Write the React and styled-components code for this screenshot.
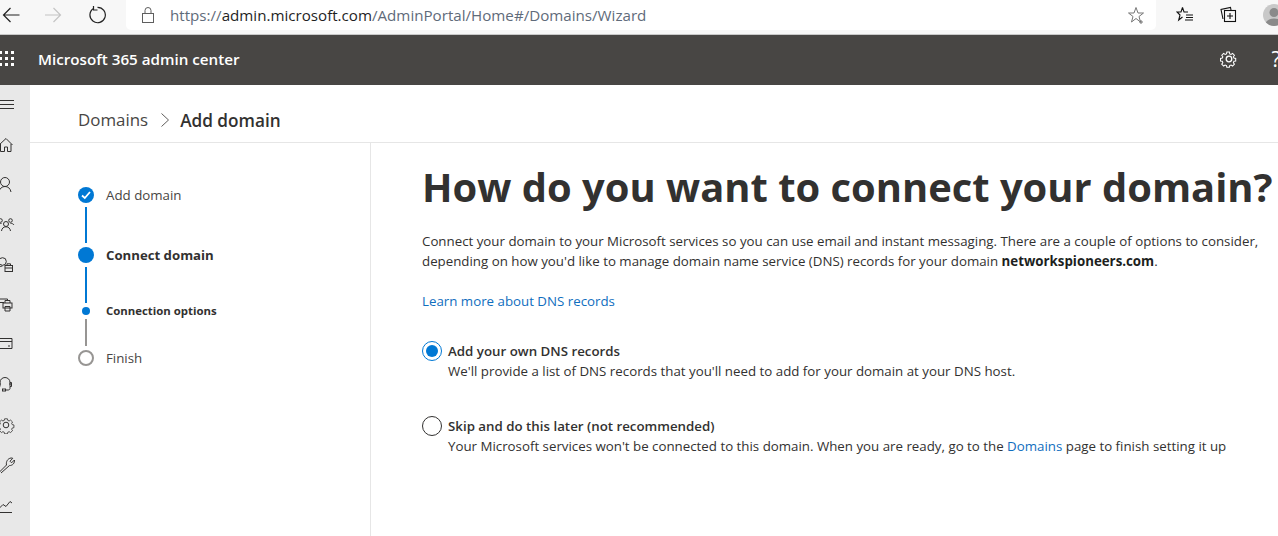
import React from 'react';
import styled, { createGlobalStyle } from 'styled-components';

const Global = createGlobalStyle`
  html, body { margin: 0; padding: 0; height: 100%; overflow: hidden; background: #fff; }
  body { font-family: "Open Sans", "Noto Sans", "Liberation Sans", sans-serif; color: #323130; }
  * { box-sizing: border-box; }
`;

const Page = styled.div`
  width: 1278px;
  height: 536px;
  display: flex;
  flex-direction: column;
  overflow: hidden;
`;

const BrowserBar = styled.div`
  height: 35px;
  flex: none;
  background: #f7f7f7;
  border-bottom: 1px solid #c9c9c9;
  display: flex;
  align-items: flex-start;
  padding-left: 1px;
  overflow: hidden;
`;

const NavButton = styled.div`
  width: ${p => p.$w}px;
  height: 30px;
  display: flex;
  align-items: center;
  justify-content: center;
  flex: none;
  svg { display: block; }
`;

const UrlBox = styled.div`
  width: 1030px;
  height: 30px;
  margin-left: 17px;
  flex: none;
  background: #fff;
  border-radius: 0 0 5px 5px;
  display: flex;
  align-items: center;
  padding: 0 10px 0 14px;
  font-size: 15.15px;
  color: #1f1f1f;
`;

const UrlText = styled.span`
  margin-left: 14px;
  flex: 1;
  white-space: nowrap;
  span { color: #5f6b7a; }
`;

const Avatar = styled.div`
  width: 22px;
  height: 22px;
  border-radius: 50%;
  background: #c8c8c8;
  margin: 4px 0 0 19px;
  flex: none;
  overflow: hidden;
  svg { display: block; }
`;

const Header = styled.header`
  height: 50px;
  flex: none;
  background: #484644;
  color: #fff;
  display: flex;
  align-items: center;
  overflow: hidden;
`;

const Waffle = styled.div`
  width: 15px;
  margin: -3px 0 0 -1px;
  display: grid;
  grid-template-columns: repeat(3, 3px);
  gap: 3px;
  flex: none;
  i { display: block; width: 3px; height: 3px; background: #fff; }
`;

const Title = styled.div`
  margin-left: 24px;
  margin-top: -2px;
  font-size: 15.2px;
  font-weight: 600;
  flex: 1;
  white-space: nowrap;
`;

const HeaderIcon = styled.div`
  width: 20px;
  margin-top: -2px;
  margin-right: ${p => p.$mr}px;
  flex: none;
  font-size: 21px;
  display: flex;
  justify-content: center;
  svg { display: block; }
`;

const Body = styled.div`
  flex: 1;
  display: flex;
  min-height: 0;
`;

const Rail = styled.nav`
  width: 30px;
  flex: none;
  background: #e8e8e8;
  display: flex;
  flex-direction: column;
  overflow: hidden;
  padding-top: 14px;
`;

const RailIcon = styled.div`
  height: 40px;
  flex: none;
  margin-left: -2px;
  svg { display: block; }
`;

const RailFirst = styled(RailIcon)`
  height: 37px;
  margin-left: -1px;
`;

const Main = styled.main`
  flex: 1;
  display: flex;
  flex-direction: column;
  min-width: 0;
`;

const Crumbs = styled.div`
  height: 58px;
  flex: none;
  border-bottom: 1px solid #e6e6e6;
  display: flex;
  align-items: center;
  padding: 12px 0 0 48px;
`;

const CrumbLink = styled.span`
  font-size: 16.9px;
  color: #484644;
`;

const CrumbSep = styled.span`
  margin: 0 10px 0 12px;
  display: flex;
  svg { display: block; }
`;

const CrumbCurrent = styled.span`
  padding-top: 2px;
  font-size: 17.2px;
  font-weight: 600;
`;

const Columns = styled.div`
  flex: 1;
  display: flex;
  min-height: 0;
`;

const Steps = styled.aside`
  width: 341px;
  flex: none;
  border-right: 1px solid #e6e6e6;
  padding: 44px 0 0 48px;
`;

const Step = styled.div`
  display: flex;
  height: 16px;
  align-items: center;
`;

const Marker = styled.div`
  width: 16px;
  height: 16px;
  flex: none;
  border-radius: 50%;
  display: flex;
  align-items: center;
  justify-content: center;
  background: ${p => (p.$kind === 'todo' ? '#fff' : p.$kind === 'sub' ? 'transparent' : '#0078d4')};
  border: ${p => (p.$kind === 'todo' ? '2px solid #979593' : 'none')};
  &::after {
    content: ${p => (p.$kind === 'sub' ? '""' : 'none')};
    width: 8px;
    height: 8px;
    border-radius: 50%;
    background: #0078d4;
  }
  svg { display: block; }
`;

const StepLabel = styled.span`
  margin-left: 12px;
  margin-top: ${p => (p.$sub ? -2 : 0)}px;
  font-size: ${p => (p.$sub ? 11.4 : p.$bold ? 13.2 : 13.3)}px;
  font-weight: ${p => (p.$bold ? 700 : 400)};
  color: ${p => (p.$bold ? '#323130' : '#484644')};
  white-space: nowrap;
`;

const Connector = styled.div`
  width: 2px;
  height: ${p => p.$h}px;
  margin: ${p => p.$mt}px 0 ${p => p.$mb}px 7px;
  background: ${p => p.$color};
`;

const Content = styled.section`
  flex: 1;
  min-width: 0;
  padding: 17px 0 0 51px;
  overflow: hidden;
`;

const Heading = styled.h1`
  margin: 0;
  font-size: 39.9px;
  line-height: 54px;
  font-weight: 700;
  white-space: nowrap;
  color: #323130;
`;

const Intro = styled.p`
  margin: 17px 0 0;
  font-size: 13.3px;
  line-height: 20px;
  white-space: nowrap;
  color: #323130;
  strong { font-weight: 700; color: #201f1e; }
`;

const LearnMore = styled.a`
  display: block;
  margin-top: 20px;
  font-size: 13.3px;
  line-height: 20px;
  color: #106ebe;
`;

const Option = styled.div`
  display: flex;
  margin-top: ${p => p.$mt}px;
`;

const Radio = styled.div`
  width: 20px;
  height: 20px;
  flex: none;
  border-radius: 50%;
  border: 1px solid ${p => (p.$on ? '#0078d4' : '#323130')};
  display: flex;
  align-items: center;
  justify-content: center;
  &::after {
    content: ${p => (p.$on ? '""' : 'none')};
    width: 12px;
    height: 12px;
    border-radius: 50%;
    background: #0078d4;
  }
`;

const OptionText = styled.div`
  margin-left: 6px;
  font-size: 13.3px;
  line-height: 20px;
  white-space: nowrap;
  a { color: #106ebe; }
`;

const OptionTitle = styled.div`
  font-weight: 600;
`;

const stroke = { fill: 'none', stroke: '#323130', strokeWidth: 1 };

const RailSvg = ({ children }) => (
  <svg width="18" height="18" viewBox="0 0 18 18" {...stroke}>{children}</svg>
);

const railIcons = [
  <path key="h" d="M1 9 8 2.500 14.500 9M2.500 8v7.500h4V11h3v4.500h3.500V8" />,
  <g key="u"><circle cx="7" cy="6" r="4.500" /><path d="M1 16c.6-3.600 3-5.500 6-5.500s5.400 1.900 6 5.500" /></g>,
  <g key="g"><circle cx="8" cy="8" r="2.500" /><circle cx="2.500" cy="4.500" r="1.800" /><circle cx="12.500" cy="4.500" r="1.800" /><path d="M3.500 15c.3-2.600 2-4.200 4.500-4.200s4.200 1.600 4.500 4.200M0 9c.8-1.200 2-1.800 3.500-1.500M16 9c-.8-1.200-2-1.800-3.500-1.500" /></g>,
  <g key="a"><circle cx="4.500" cy="5.500" r="3.800" /><path d="M0 14c.5-2.200 2-4 4.500-4" /><rect x="7" y="9.500" width="7.500" height="6" /><path d="M9 9.500V7.800h3.500v1.700M7 12h7.500" /></g>,
  <g key="p"><path d="M1 10.500V3h8.500v2" /><path d="M1 6.500h5" /><rect x="5" y="7" width="9" height="5" /><path d="M7 7V4.500h5V7M7 10.500h5V15H7z" /></g>,
  <g key="c"><path d="M-1 2.500h15v10H-1zM-1 5.500h15M10 10h2" /></g>,
  <g key="s"><path d="M2 9V6.500C2 3.500 4.300 1.500 7 1.500s5 2 5 5V9" /><path d="M12 6.500h1.500v4H12zM2 6.500H.5v4H2zM12 10.500v2c0 1-1 1.500-2 1.500H7" /><rect x="4.500" y="13" width="3" height="2" /></g>,
  <g key="g2"><circle cx="8" cy="9" r="2.800" /><path d="M6.300 2h3.400l.4 2 1.600.7 1.700-1.100 2.400 2.400-1.100 1.700.7 1.600 2 .4v3.400l-2 .4-.7 1.600 1.100 1.700-2.400 2.400-1.700-1.100-1.600.7-.4 2H6.300l-.4-2-1.600-.7-1.700 1.100L.2 16.800l1.100-1.700-.7-1.600-2-.4V9.700l2-.4.7-1.600L.2 6 2.600 3.600l1.700 1.100 1.600-.7z" transform="translate(1.300 1.200) scale(.84 .8)" /></g>,
  <path key="w" d="M1 16.500 8.500 9C7.800 6 9.500 2.500 13 2c.8 0 1.300.1 1.800.3L12 5.200l1.600 1.600 2.800-2.800c.4 3-1.500 5.500-5 5.600L3 17" />,
  <g key="l"><path d="M0 13.500 5 8.500 8 10.500 12 5.500 14 7" /><path d="M-1 16.500h15" /></g>,
];

function Lock() {
  return (
    <svg width="16" height="18" viewBox="0 0 16 18" fill="none" stroke="#5f5f5f" strokeWidth="1">
      <rect x="2.500" y="7.500" width="11" height="9" />
      <path d="M5 7.500V4.500a3 3 0 0 1 6 0v3" />
    </svg>
  );
}

function Gear({ size = 18 }) {
  return (
    <svg width={size} height={size} viewBox="0 0 18 18" fill="none" stroke="#fff" strokeWidth="1.300">
      <circle cx="9" cy="9" r="2.800" />
      <path d="M7.400 1.500h3.200l.4 2.200 1.700.7 1.900-1.300 2.300 2.300-1.300 1.900.7 1.700 2.200.4v3.200l-2.200.4-.7 1.700 1.300 1.900-2.300 2.300-1.900-1.300-1.700.7-.4 2.200H7.400L7 18.300l-1.700-.7-1.900 1.300-2.300-2.300 1.300-1.900-.7-1.700-2.200-.4v-3.200l2.200-.4.7-1.700-1.300-1.900 2.300-2.300 1.900 1.300L7 3.700z" transform="translate(.9 .9) scale(.8)" />
    </svg>
  );
}

export default function App() {
  return (
    <Page>
      <Global />
      <BrowserBar>
        <NavButton $w={20}>
          <svg width="18" height="18" viewBox="0 0 18 18" fill="none" stroke="#222" strokeWidth="1.200">
            <path d="M1.500 9h16M8.500 2 1.500 9l7 7" />
          </svg>
        </NavButton>
        <NavButton $w={64}>
          <svg width="18" height="18" viewBox="0 0 18 18" fill="none" stroke="#c4c4c4" strokeWidth="1.200">
            <path d="M1 9h15.500M9.500 2l7 7-7 7" />
          </svg>
        </NavButton>
        <NavButton $w={24}>
          <svg width="18" height="18" viewBox="0 0 18 18" fill="none" stroke="#222" strokeWidth="1.200">
            <path d="M5.500 2.500A7.700 7.700 0 1 0 9.500 1.300" />
            <path d="M5 1v4h4" transform="translate(.5 -1)" />
          </svg>
        </NavButton>
        <UrlBox>
          <Lock />
          <UrlText><span>https://</span>admin.microsoft.com<span>/AdminPortal/Home#/Domains/Wizard</span></UrlText>
          <svg width="18" height="18" viewBox="0 0 18 18" fill="none" stroke="#777" strokeWidth="1">
            <path d="M8 1.500 10 7h5.500L11 10.500 12.500 16 8 12.500 3.500 16 5 10.500.5 7H6zM13 14v4M11 16h4" />
          </svg>
        </UrlBox>
        <NavButton $w={58}>
          <svg width="18" height="18" viewBox="0 0 18 18" fill="none" stroke="#111" strokeWidth="1.100">
            <path d="M6.500 1.500 8 6H12M6.500 1.500 5 6H1l3 3-1.300 5 3.800-3M10 9h7M10 11.500h7M9 14h8" />
          </svg>
        </NavButton>
        <NavButton $w={30}>
          <svg width="18" height="18" viewBox="0 0 18 18" fill="none" stroke="#111" strokeWidth="1.100">
            <path d="M3 13 1 3.500 10.500 1.500l.5 2.500" />
            <rect x="4.500" y="4.500" width="11" height="11" />
            <path d="M10 7v6M7 10h6" />
          </svg>
        </NavButton>
        <Avatar>
          <svg width="22" height="22" viewBox="0 0 22 22" fill="#8a8a8a">
            <circle cx="11" cy="8.500" r="4.500" />
            <path d="M2 22c0-5 4-7.500 9-7.500s9 2.500 9 7.500z" />
          </svg>
        </Avatar>
      </BrowserBar>

      <Header>
        <Waffle>{Array.from({ length: 9 }, (_, i) => <i key={i} />)}</Waffle>
        <Title>Microsoft 365 admin center</Title>
        <HeaderIcon $mr={27}><Gear /></HeaderIcon>
        <HeaderIcon $mr={-8}>?</HeaderIcon>
      </Header>

      <Body>
        <Rail>
          <RailFirst>
            <svg width="16" height="12" viewBox="0 0 16 12" stroke="#323130" strokeWidth="1">
              <path d="M0 1.500h15M0 5.500h15M0 9.500h15" />
            </svg>
          </RailFirst>
          {railIcons.map((icon, i) => <RailIcon key={i}><RailSvg>{icon}</RailSvg></RailIcon>)}
        </Rail>
        <Main>
          <Crumbs>
            <CrumbLink>Domains</CrumbLink>
            <CrumbSep>
              <svg width="10" height="16" viewBox="0 0 10 16" fill="none" stroke="#605e5c" strokeWidth="1">
                <path d="m1.500 1.500 7 6.500-7 6.500" />
              </svg>
            </CrumbSep>
            <CrumbCurrent>Add domain</CrumbCurrent>
          </Crumbs>
          <Columns>
            <Steps>
              <Step>
                <Marker $kind="done">
                  <svg width="12" height="12" viewBox="0 0 12 12" fill="none" stroke="#fff" strokeWidth="1.800">
                    <path d="m2 6.500 2.800 2.500L10 3" />
                  </svg>
                </Marker>
                <StepLabel>Add domain</StepLabel>
              </Step>
              <Connector $h={36} $mt={4} $mb={4} $color="#0078d4" />
              <Step>
                <Marker $kind="current" />
                <StepLabel $bold>Connect domain</StepLabel>
              </Step>
              <Connector $h={36} $mt={4} $mb={0} $color="#0078d4" />
              <Step>
                <Marker $kind="sub" />
                <StepLabel $sub $bold>Connection options</StepLabel>
              </Step>
              <Connector $h={27} $mt={0} $mb={4} $color="#979593" />
              <Step>
                <Marker $kind="todo" />
                <StepLabel>Finish</StepLabel>
              </Step>
            </Steps>
            <Content>
              <Heading>How do you want to connect your domain?</Heading>
              <Intro>
                Connect your domain to your Microsoft services so you can use email and instant messaging. There are a couple of options to consider,<br />
                depending on how you'd like to manage domain name service (DNS) records for your domain <strong>networkspioneers.com</strong>.
              </Intro>
              <LearnMore>Learn more about DNS records</LearnMore>
              <Option $mt={30}>
                <Radio $on />
                <OptionText>
                  <OptionTitle>Add your own DNS records</OptionTitle>
                  We'll provide a list of DNS records that you'll need to add for your domain at your DNS host.
                </OptionText>
              </Option>
              <Option $mt={35}>
                <Radio />
                <OptionText>
                  <OptionTitle>Skip and do this later (not recommended)</OptionTitle>
                  Your Microsoft services won't be connected to this domain. When you are ready, go to the <a>Domains</a> page to finish setting it up
                </OptionText>
              </Option>
            </Content>
          </Columns>
        </Main>
      </Body>
    </Page>
  );
}
